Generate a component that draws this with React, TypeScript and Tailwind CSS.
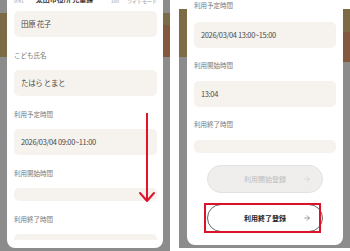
import React from "react";
import { ArrowRight } from "lucide-react";

const Field = ({ value, className = "" }: { value?: string; className?: string }) => (
  <div
    className={`flex shrink-0 items-center rounded-[5px] bg-[#f6f3ef] px-[7px] text-[7.5px] tracking-[-0.35px] text-[#4a4a4a] ${className}`}
  >
    {value}
  </div>
);

const Label = ({ children, className = "" }: { children: React.ReactNode; className?: string }) => (
  <div className={`flex h-[14px] shrink-0 items-center text-[6.5px] text-[#777] ${className}`}>{children}</div>
);

const LeftPanel = () => (
  <div className="relative flex h-[251px] w-[170px] shrink-0 bg-[#8c8c8c]">
    <div className="w-[7px] bg-[linear-gradient(to_bottom,#8c8c8c_13px,#7b6c46_13px,#7b6c46_57px,#8c8c8c_57px)]" />
    <div className="mb-[3px] flex w-[156px] flex-col overflow-hidden rounded-b-[8px] bg-white">
      <div className="flex flex-1 flex-col overflow-hidden pl-[7px] pr-[6px]">
        {/* status bar, cut at the top */}
        <div className="flex h-[11px] shrink-0 items-start justify-between text-[5px] text-[#999]">
          <div className="-mt-[3px] flex gap-[12px]">
            <span>9:41</span>
            <span className="-mt-[3px] text-[7px] font-bold text-[#333]">太田市役所 児童課</span>
          </div>
          <div className="-mt-[3px] flex gap-[8px]">
            <span>100</span>
            <span>ライトモード</span>
          </div>
        </div>
        <Field value="田原 花子" className="h-[26px]" />
        <Label className="mt-[12px]">こども氏名</Label>
        <Field value="たはら とまと" className="mt-[7px] h-[26px]" />
        <Label className="mt-[12px]">利用予定時間</Label>
        <Field value="2026/03/04 09:00~11:00" className="mt-[7px] h-[26px]" />
        <Label className="mt-[12px]">利用開始時間</Label>
        <Field className="mt-[7px] h-[13px]" />
        <Label className="mt-[12px]">利用終了時間</Label>
        <Field className="mt-[7px] h-[26px]" />
      </div>
      <div className="h-[8px] shrink-0" />
    </div>
    <div className="w-[7px] bg-[linear-gradient(to_bottom,#8c8c8c_13px,#7b6c46_13px,#7b6c46_25px,#84573f_25px,#84573f_57px,#8c8c8c_57px)]" />

    {/* red scroll arrow */}
    <svg
      className="pointer-events-none absolute left-0 top-0"
      width="170"
      height="251"
      viewBox="0 0 170 251"
    >
      <line x1="147" y1="113" x2="147" y2="201" stroke="#e0142b" strokeWidth="2" />
      <polyline
        points="140,193 147,201 154,193"
        fill="none"
        stroke="#e0142b"
        strokeWidth="2"
        strokeLinejoin="round"
        strokeLinecap="round"
      />
    </svg>
  </div>
);

const RightPanel = () => (
  <div className="flex h-[251px] w-[171px] shrink-0 flex-col bg-white">
    <div className="flex h-[248px] bg-[#8c8c8c]">
      <div className="w-[8px] bg-[linear-gradient(to_bottom,#ffffff_9px,#7b6c46_9px,#7b6c46_57px,#8c8c8c_57px)]" />
      <div className="mb-[3px] flex w-[156px] flex-col overflow-hidden rounded-b-[8px] bg-white px-[7px]">
        <Label className="-mt-[1px]">利用予定時間</Label>
        <Field value="2026/03/04 13:00~15:00" className="mt-[9px] h-[26px]" />
        <Label className="mt-[11px]">利用開始時間</Label>
        <Field value="13:04" className="mt-[8px] h-[26px]" />
        <Label className="mt-[11px]">利用終了時間</Label>
        <Field className="mt-[8px] h-[13px]" />

        <div className="relative mt-[12px] flex h-[28px] w-[116px] shrink-0 items-center justify-center self-center rounded-full border border-[#e2e2e2] bg-[#efeeec] text-[7px] text-[#bdbdbd]">
          利用開始登録
          <ArrowRight className="absolute right-[11px]" size={8} strokeWidth={1.5} color="#c4c4c4" />
        </div>

        <div className="relative mt-[11px] flex h-[28px] w-[116px] shrink-0 items-center justify-center self-center rounded-full border border-[#666] bg-white text-[7px] font-bold text-[#222]">
          利用終了登録
          <ArrowRight className="absolute right-[11px]" size={8} strokeWidth={1.5} color="#444" />
          <div className="pointer-events-none absolute -left-[4px] -top-[2px] h-[30px] w-[117px] border-2 border-[#d9132a]" />
        </div>
      </div>
      <div className="w-[7px] bg-[linear-gradient(to_bottom,#ffffff_9px,#7b6c46_9px,#7b6c46_32px,#84573f_32px,#84573f_62px,#8c8c8c_62px)]" />
    </div>
  </div>
);

export default function App() {
  return (
    <div className="flex h-[251px] w-[350px] overflow-hidden bg-white font-['Noto_Sans_CJK_JP','Noto_Sans',sans-serif]">
      <LeftPanel />
      <div className="w-[9px] shrink-0 bg-white" />
      <RightPanel />
    </div>
  );
}
